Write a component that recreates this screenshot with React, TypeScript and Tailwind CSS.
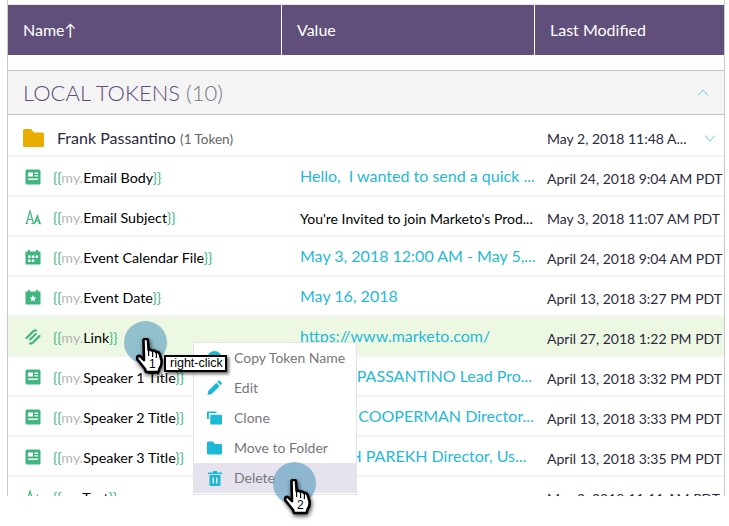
import React from "react";

const G = "#3fb67f";

function IconBody() {
  return (
    <svg width="16" height="16" viewBox="0 0 16 16">
      <rect x="0.5" y="0.5" width="15" height="15" rx="1.5" fill={G} />
      <rect x="3" y="3.5" width="5" height="4" fill="#fff" />
      <rect x="9.5" y="3.5" width="3.5" height="1.3" fill="#fff" />
      <rect x="9.5" y="6.2" width="3.5" height="1.3" fill="#fff" />
      <rect x="3" y="9.5" width="10" height="1.5" fill="#fff" />
    </svg>
  );
}
function IconText() {
  return (
    <svg width="16" height="16" viewBox="0 0 16 16" fill="none" stroke={G} strokeWidth="1.2">
      <path d="M0.5 14.5 H3 M1.5 14.5 L5 2 L8.5 14.5 M6.5 14.5 H9.5 M2.8 10.5 H7.2" />
      <path d="M9.5 14.5 L12.3 7 L15 14.5 H13.5 M10.7 11.8 H14" strokeWidth="1.5" />
    </svg>
  );
}
function IconCal() {
  return (
    <svg width="16" height="16" viewBox="0 0 16 16">
      <path d="M0.5 2.5 H3 V1 H5 V2.5 H11 V1 H13 V2.5 H15.5 V15.5 H0.5 Z" fill={G} />
      <g fill="#fff">
        <rect x="3" y="6.5" width="2.5" height="2.5" />
        <rect x="6.8" y="6.5" width="2.5" height="2.5" />
        <rect x="10.6" y="6.5" width="2.5" height="2.5" />
        <rect x="3" y="10.5" width="2.5" height="2.5" />
        <rect x="6.8" y="10.5" width="2.5" height="2.5" />
      </g>
    </svg>
  );
}
function IconDate() {
  return (
    <svg width="16" height="16" viewBox="0 0 16 16">
      <path d="M0.5 2.5 H3 V1 H5 V2.5 H11 V1 H13 V2.5 H15.5 V15.5 H0.5 Z" fill={G} />
      <path d="M8 6 L9 8.3 L11.4 8.5 L9.6 10.1 L10.1 12.4 L8 11.2 L5.9 12.4 L6.4 10.1 L4.6 8.5 L7 8.3 Z" fill="#fff" />
    </svg>
  );
}
function IconLink() {
  return (
    <svg width="16" height="16" viewBox="0 0 16 16" fill="none" stroke={G} strokeWidth="2.2" strokeLinecap="round">
      <path d="M1.5 9 L8 2.5 Q9.5 1.2 11 1.5" />
      <path d="M5 14.5 Q6.5 14.8 8 13.5 L14.5 7" />
      <path d="M5 10.5 L10.8 5" />
    </svg>
  );
}
function Folder({ color, w = 16, h = 14 }: { color: string; w?: number; h?: number }) {
  return (
    <svg width={w} height={h} viewBox="0 0 21 18">
      <path d="M1.5 0 H8 L11 3.5 H19.5 Q21 3.5 21 5 V16.5 Q21 18 19.5 18 H1.5 Q0 18 0 16.5 V1.5 Q0 0 1.5 0 Z" fill={color} />
    </svg>
  );
}
function Hand({ n }: { n: string }) {
  return (
    <div className="relative w-[30px] h-[38px]">
      <svg
        width="30"
        height="38"
        viewBox="0 0 30 38"
        className="absolute inset-0 drop-shadow-[1px_2px_2px_rgba(0,0,0,0.7)]"
      >
        <path
          d="M7.5 2.5 Q7.5 0.8 9.7 0.8 Q11.9 0.8 12 2.5 L12.6 12 Q14.8 10.8 16.3 12.8 Q18.6 11.8 20 14 Q22.5 13.2 23.6 15.8 L25.5 22 Q26.2 27 23.5 30.5 L22.5 34 L10 34 L9 31 L1.5 21.5 Q0.3 19 2.3 18 Q4 17.5 5.5 19.5 L8 22 Z"
          fill="#fff"
          stroke="#000"
          strokeWidth="2.6"
          strokeLinejoin="round"
        />
        <path d="M12.6 13 V18 M16.6 14 V19 M20.4 15 V20" stroke="#000" strokeWidth="1.2" fill="none" />
      </svg>
      <span className="absolute left-[13px] top-[19px] text-[12px] leading-[14px] text-black font-['Liberation_Sans',sans-serif]">
        {n}
      </span>
    </div>
  );
}

function Name({ t }: { t: string }) {
  return (
    <span className="text-[14.3px] text-black whitespace-nowrap pt-[2px]">
      <span className="text-[#3fb67f]">{"{{"}</span>
      <span className="text-[#b5b5b5]">my.</span>
      {t}
      <span className="text-[#3fb67f]">{"}}"}</span>
    </span>
  );
}

type R = { icon: React.ReactNode; name: string; value: string; date: string; plain?: boolean; green?: boolean };
const rows: R[] = [
  { icon: <IconBody />, name: "Email Body", value: "Hello,\u00a0\u00a0I wanted to send a quick ...", date: "April 24, 2018 9:04 AM PDT" },
  { icon: <IconText />, name: "Email Subject", value: "You're Invited to join Marketo's Prod...", date: "May 3, 2018 11:07 AM PDT", plain: true },
  { icon: <IconCal />, name: "Event Calendar File", value: "May 3, 2018 12:00 AM - May 5,...", date: "April 24, 2018 9:04 AM PDT" },
  { icon: <IconDate />, name: "Event Date", value: "May 16, 2018", date: "April 13, 2018 3:27 PM PDT" },
  { icon: <IconLink />, name: "Link", value: "https://www.marketo.com/", date: "April 27, 2018 1:22 PM PDT", green: true },
  { icon: <IconBody />, name: "Speaker 1 Title", value: "FRANK PASSANTINO Lead Pro...", date: "April 13, 2018 3:32 PM PDT" },
  { icon: <IconBody />, name: "Speaker 2 Title", value: "MARTY COOPERMAN Director...", date: "April 13, 2018 3:33 PM PDT" },
  { icon: <IconBody />, name: "Speaker 3 Title", value: "NIMESH PAREKH Director, Us...", date: "April 13, 2018 3:35 PM PDT" },
  { icon: <IconText />, name: "Text", value: "", date: "May 3, 2018 11:11 AM PDT" },
];

function Row({ r }: { r: R }) {
  return (
    <div className={`flex items-center h-10 shrink-0 pt-[2px] border-b-2 border-[#f4f4f4] ${r.green ? "bg-[#edf8e3]" : "bg-white"}`}>
      <div className="w-[292px] pl-[17px] flex items-center gap-[12px] shrink-0">
        {r.icon}
        <Name t={r.name} />
      </div>
      <div
        className={`w-[247px] shrink-0 whitespace-nowrap overflow-hidden ${
          r.plain ? "text-[14px] text-black pt-[2px]" : "text-[16px] text-[#25b9d6] pb-[3px]"
        }`}
      >
        {r.value}
      </div>
      <div className="text-[14px] text-[#2c2a40] whitespace-nowrap pt-[2px]">{r.date}</div>
    </div>
  );
}

function MenuItem({ icon, label, hover }: { icon: React.ReactNode; label: string; hover?: boolean }) {
  return (
    <div className={`flex items-center h-[30px] pl-[13px] gap-[12px] ${hover ? "bg-[#e6e3ee]" : ""}`}>
      <span className="w-[15px] flex justify-center">{icon}</span>
      <span className="text-[14px] text-[#77767c] pb-[2px]">{label}</span>
    </div>
  );
}

const C = "#1cb9d6";

export default function App() {
  return (
    <div className="relative w-[729px] h-[526px] bg-white font-['Lato',sans-serif] overflow-hidden">
      <div className="h-[496px] w-[718px] ml-[7px] pt-[4px] border-x border-[#c9c9c9] overflow-hidden flex flex-col">
        <div className="h-[51px] shrink-0 flex bg-[#604f7a] border-t border-[#e8e8e8] text-white text-[16px] items-center">
          <div className="w-[274px] h-full pl-[15px] flex items-center border-r border-white">Name↑</div>
          <div className="w-[253px] h-full pl-[15px] flex items-center border-r border-white">Value</div>
          <div className="pl-[15px]">Last Modified</div>
        </div>
        <div className="h-[15px] shrink-0 bg-white" />
        <div className="h-[45px] shrink-0 bg-[#f4f4f4] border-y border-[#c4c4c4] flex items-center pl-[15px] pr-[15px] justify-between">
          <span className="text-[22px] font-light text-[#604f7a]">
            LOCAL TOKENS <span className="text-[#77767c]">(10)</span>
          </span>
          <svg width="12" height="7" viewBox="0 0 12 7" fill="none" stroke="#5fd0e6" strokeWidth="1">
            <path d="M1 6.5 L6 1 L11 6.5" />
          </svg>
        </div>
        <div className="h-[42px] shrink-0 flex items-center pt-[6px] border-b-2 border-[#f4f4f4] bg-white">
          <div className="w-[292px] pl-[15px] flex items-center gap-[13px] shrink-0">
            <Folder color="#e9ad00" w={21} h={18} />
            <span className="text-[16px] text-[#2c2a40] whitespace-nowrap">
              Frank Passantino <span className="text-[13.5px] text-[#666]">(1 Token)</span>
            </span>
          </div>
          <div className="w-[247px] shrink-0" />
          <div className="text-[14px] text-[#2c2a40] whitespace-nowrap">May 2, 2018 11:48 A...</div>
          <svg className="ml-[18px]" width="12" height="7" viewBox="0 0 12 7" fill="none" stroke="#5fd0e6" strokeWidth="1">
            <path d="M1 0.5 L6 6 L11 0.5" />
          </svg>
        </div>
        {rows.map((r) => (
          <Row key={r.name} r={r} />
        ))}
      </div>

      {/* context menu */}
      <div className="absolute left-[193px] top-[342px] w-[164px] h-[153px] bg-white border border-[#e4e2ea]">
        <MenuItem
          icon={
            <svg width="15" height="15" viewBox="0 0 15 15">
              <circle cx="7.5" cy="7.5" r="7.5" fill={C} />
            </svg>
          }
          label="Copy Token Name"
        />
        <MenuItem
          icon={
            <svg width="16" height="16" viewBox="0 0 16 16" fill={C}>
              <path d="M0.5 15.5 L1.5 11 L10 2.5 L13.5 6 L5 14.5 Z" />
              <path d="M11 1.5 L12.3 0.3 Q13 -0.2 13.7 0.3 L15.7 2.3 Q16.2 3 15.7 3.7 L14.5 5 Z" />
            </svg>
          }
          label="Edit"
        />
        <MenuItem
          icon={
            <svg width="16" height="14" viewBox="0 0 16 14" fill={C}>
              <path d="M0 0.8 Q0 0 0.8 0 H10 V2 H2 V8 H0 Z" />
              <rect x="3.5" y="3.5" width="12.5" height="10.5" rx="1" />
            </svg>
          }
          label="Clone"
        />
        <MenuItem icon={<Folder color={C} />} label="Move to Folder" />
        <MenuItem
          hover
          icon={
            <svg width="14" height="15" viewBox="0 0 14 15" fill={C}>
              <rect x="0" y="1.5" width="14" height="1.6" />
              <rect x="5" y="0" width="4" height="2" />
              <path d="M1.5 4 H12.5 V14 Q12.5 15 11.5 15 H2.5 Q1.5 15 1.5 14 Z M4.5 6.5 V12.5 H6 V6.5 Z M8 6.5 V12.5 H9.5 V6.5 Z" fillRule="evenodd" />
            </svg>
          }
          label="Delete"
        />
      </div>

      {/* annotations */}
      <div className="absolute left-[124px] top-[321px] w-[43px] h-[43px] rounded-full bg-[#5f9fc0]/65" />
      <div className="absolute left-[273px] top-[462px] w-[43px] h-[43px] rounded-full bg-[#5f9fc0]/65" />
      <div className="absolute left-[136px] top-[338px]">
        <Hand n="1" />
      </div>
      <div className="absolute left-[284px] top-[479px]">
        <Hand n="2" />
      </div>
      <div className="absolute left-[164px] top-[355px] h-[17px] pl-[4px] pr-[2px] bg-white border-2 border-black shadow-[2px_2px_3px_rgba(0,0,0,0.6)] flex items-center text-[12.5px] leading-none text-black font-['Liberation_Sans',sans-serif]">
        right-click
      </div>
    </div>
  );
}
